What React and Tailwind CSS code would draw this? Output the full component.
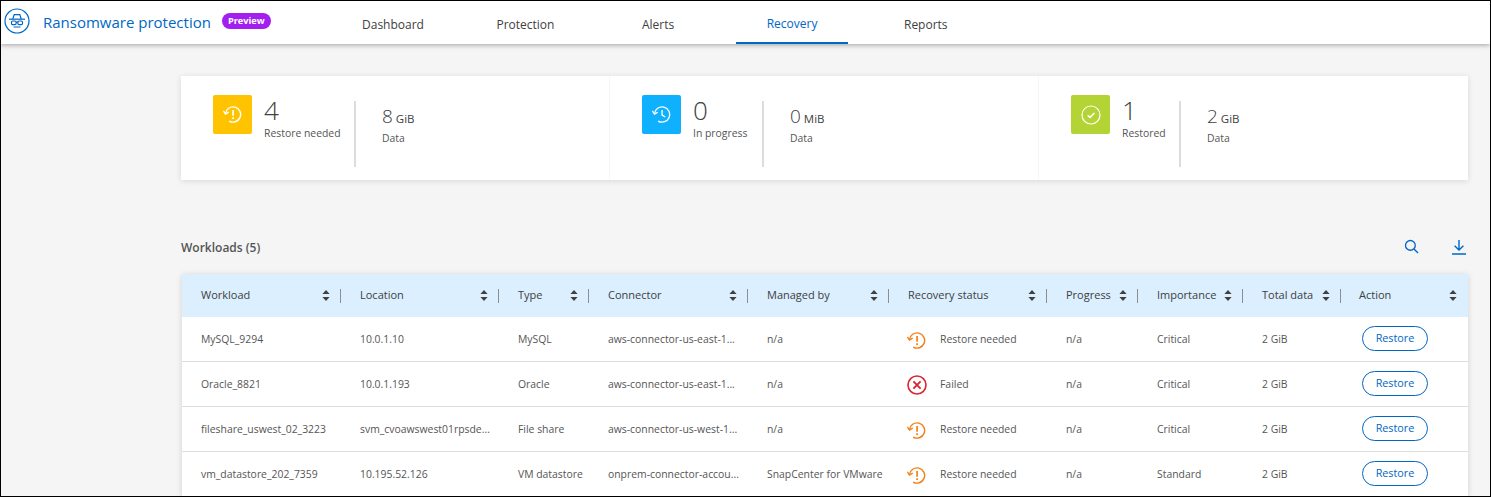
import React from 'react';

const tabs = ['Dashboard', 'Protection', 'Alerts', 'Recovery', 'Reports'];
const columns = ['Workload', 'Location', 'Type', 'Connector', 'Managed by', 'Recovery status', 'Progress', 'Importance', 'Total data', 'Action'];
const gridCols = 'grid grid-cols-[159px_158px_90px_159px_141px_158px_91px_105px_98px_127px]';

const rows = [
  ['MySQL_9294', '10.0.1.10', 'MySQL', 'aws-connector-us-east-1...', 'n/a', 'Restore needed', 'n/a', 'Critical', '2 GiB'],
  ['Oracle_8821', '10.0.1.193', 'Oracle', 'aws-connector-us-east-1...', 'n/a', 'Failed', 'n/a', 'Critical', '2 GiB'],
  ['fileshare_uswest_02_3223', 'svm_cvoawswest01rpsde...', 'File share', 'aws-connector-us-west-1...', 'n/a', 'Restore needed', 'n/a', 'Critical', '2 GiB'],
  ['vm_datastore_202_7359', '10.195.52.126', 'VM datastore', 'onprem-connector-accou...', 'SnapCenter for VMware', 'Restore needed', 'n/a', 'Standard', '2 GiB'],
];

function SpyLogo() {
  return (
    <svg viewBox="0 0 26 26" className="w-[26px] h-[26px]" fill="none" stroke="#0067c5" strokeWidth="1.2">
      <circle cx="13" cy="13" r="12" />
      <path d="M8.8 11l1.4-4.4h5.6l1.4 4.4" />
      <path d="M5 11.2h16" />
      <rect x="7.5" y="13" width="4.6" height="3.6" rx="1.2" />
      <rect x="13.9" y="13" width="4.6" height="3.6" rx="1.2" />
      <path d="M12.1 14.2h1.8M9.5 19h7" />
    </svg>
  );
}

function RestoreIcon({ className }) {
  return (
    <svg viewBox="0 0 20 20" className={className} fill="none" stroke="currentColor" strokeWidth="1.5">
      <path d="M2.6 9.2A8 8 0 1 1 6.5 16.9" />
      <path d="M0.4 6.2l2.2 3.4 3.4-2" />
      <path d="M10.6 5.2v6M10.6 12.8v1.9" strokeWidth="1.8" />
    </svg>
  );
}

function HistoryIcon() {
  return (
    <svg viewBox="0 0 20 20" className="w-[19px] h-[19px] text-white" fill="none" stroke="currentColor" strokeWidth="1.4">
      <path d="M2.6 9.2A8 8 0 1 1 6.5 16.9" />
      <path d="M0.4 6.2l2.2 3.4 3.4-2" />
      <path d="M10.6 5.2v5.4l3.4 2" />
    </svg>
  );
}

function CheckCircleIcon() {
  return (
    <svg viewBox="0 0 20 20" className="w-[20px] h-[20px] text-white" fill="none" stroke="currentColor" strokeWidth="1.2">
      <circle cx="10" cy="10" r="9" />
      <path d="M6.6 10.2l2.4 2.2 4.4-4.4" strokeWidth="1.5" />
    </svg>
  );
}

function FailedIcon() {
  return (
    <svg viewBox="0 0 20 20" className="w-[20px] h-[20px] text-[#d92632]" fill="none" stroke="currentColor" strokeWidth="1.6">
      <circle cx="10" cy="10" r="9" />
      <path d="M6.4 6.4l7.2 7.2M13.6 6.4l-7.2 7.2" strokeWidth="1.9" />
    </svg>
  );
}

function SortIcon() {
  return (
    <svg viewBox="0 0 8 11" className="w-[8px] h-[11px] shrink-0" fill="#404040">
      <path d="M4 0l3.6 4H.4zM4 11L.4 7h7.2z" />
    </svg>
  );
}

function Stat({ color, icon, count, label, labelWidth, value, unit, border }) {
  return (
    <div className={`flex pl-[32px] pt-[19px] ${border ? 'border-r border-[#f6f6f6]' : ''}`}>
      <div className={`w-[39px] h-[39px] rounded-[2px] flex items-center justify-center ${color}`}>{icon}</div>
      <div className={`ml-[12px] ${labelWidth}`}>
        <div className="text-[26px] leading-[28px] mt-[1px] font-light text-[#404040]">{count}</div>
        <div className="text-[10.4px] leading-[15px] mt-[2px] text-[#555]">{label}</div>
      </div>
      <div className="w-[2px] h-[66px] bg-[#dcdcdc] mt-[6px]" />
      <div className="ml-[26px] pt-[9px]">
        <div className="flex items-baseline gap-[3px] text-[#404040] leading-[24px]">
          <span className="text-[19px] font-light">{value}</span>
          <span className="text-[11.5px]">{unit}</span>
        </div>
        <div className="text-[10.4px] leading-[15px] text-[#555]">Data</div>
      </div>
    </div>
  );
}

function StatusCell({ status }) {
  return (
    <div className="flex items-center pl-[18px]">
      <div className="w-[33px] flex">
        {status === 'Failed' ? <FailedIcon /> : <RestoreIcon className="w-[19px] h-[19px] text-[#f57f17]" />}
      </div>
      <span>{status}</span>
    </div>
  );
}

export default function App() {
  return (
    <div
      className="w-[1491px] h-[497px] overflow-hidden border border-black bg-[#f5f5f5]"
      style={{ fontFamily: '"Open Sans", sans-serif' }}
    >
      {/* Header */}
      <div className="h-[43px] bg-white flex shadow-[0_1px_5px_rgba(0,0,0,0.35)] relative">
        <div className="w-[361px] flex items-center pl-[3px] pb-[3px] shrink-0">
          <SpyLogo />
          <span className="ml-[13px] mt-[2px] text-[15px] text-[#0067c5]">Ransomware protection</span>
          <span className="ml-[11px] mb-[1px] h-[16px] px-[6px] rounded-full bg-[#a31ff0] text-white text-[9.2px] font-bold leading-[16px]">Preview</span>
        </div>
        <div className="flex">
          {tabs.map((t) => (
            <div
              key={t}
              className={`h-[43px] px-[31px] pt-[4px] mr-[-0.5px] flex items-center text-[12px] ${
                t === 'Recovery' ? 'text-[#0067c5] border-b-2 border-[#0067c5]' : 'text-[#404040]'
              } ${t === 'Dashboard' ? 'pl-0 pr-[73px]' : ''} ${t === 'Protection' ? 'pl-0 pr-[88px]' : ''} ${t === 'Alerts' ? 'pl-0 pr-[62px]' : ''} ${t === 'Reports' ? 'pl-[56px] pr-0' : ''}`}
            >
              {t}
            </div>
          ))}
        </div>
      </div>

      <div className="pl-[180px] pr-[22px] pt-[32px]">
        {/* Summary */}
        <div className="h-[104px] bg-white grid grid-cols-[429px_429px_429px] shadow-[0_1px_6px_rgba(0,0,0,0.12)]">
          <Stat color="bg-[#ffc300]" icon={<RestoreIcon className="w-[19px] h-[19px] text-white" />} count="4" label="Restore needed" labelWidth="w-[90px]" value="8" unit="GiB" border />
          <Stat color="bg-[#0fb1ff]" icon={<HistoryIcon />} count="0" label="In progress" labelWidth="w-[69px]" value="0" unit="MiB" border />
          <Stat color="bg-[#b4d334]" icon={<CheckCircleIcon />} count="1" label="Restored" labelWidth="w-[57px]" value="2" unit="GiB" />
        </div>

        {/* Toolbar */}
        <div className="flex items-center h-[30px] mt-[53px] mb-[11px] text-[#0067c5]">
          <span className="text-[12px] font-semibold text-[#555]">Workloads (5)</span>
          <svg viewBox="0 0 16 16" className="w-[15px] h-[15px] ml-auto mb-[3px]" fill="none" stroke="currentColor" strokeWidth="1.4">
            <circle cx="6.8" cy="6.8" r="5.2" />
            <path d="M10.6 10.6l4.4 4.4" />
          </svg>
          <svg viewBox="0 0 16 16" className="w-[16px] h-[16px] ml-[32px] mb-[3px] mr-[1px]" fill="none" stroke="currentColor" strokeWidth="1.4">
            <path d="M8 1v10M3.6 6.8L8 11l4.4-4.2M1 15h14" />
          </svg>
        </div>

        {/* Table */}
        <div className="ml-[1px] bg-white shadow-[0_1px_6px_rgba(0,0,0,0.15)] text-[10.4px]">
          <div className={`${gridCols} h-[43px] bg-[#dbefff] items-center text-[#404040] text-[11px]`}>
            {columns.map((c, i) => (
              <div key={c} className={`flex items-center h-full ${i === 9 ? 'pl-[18px]' : 'pl-[19px]'}`}>
                <span>{c}</span>
                <div className={`ml-auto flex items-center ${i === 9 ? 'pr-[11px]' : ''}`}>
                  <SortIcon />
                  {i < 9 && <div className="w-px h-[14px] bg-[#8a8f94] ml-[10px]" />}
                </div>
              </div>
            ))}
          </div>
          {rows.map((r) => (
            <div key={r[0]} className={`${gridCols} h-[45px] pt-[2px] items-center border-b border-[#dedede] text-[#555] whitespace-nowrap`}>
              <div className="pl-[19px]">{r[0]}</div>
              <div className="pl-[19px]">{r[1]}</div>
              <div className="pl-[19px]">{r[2]}</div>
              <div className="pl-[19px]">{r[3]}</div>
              <div className="pl-[19px]">{r[4]}</div>
              <StatusCell status={r[5]} />
              <div className="pl-[19px]">{r[6]}</div>
              <div className="pl-[19px]">{r[7]}</div>
              <div className="pl-[19px]">{r[8]}</div>
              <div className="pl-[21px] mb-[4px]">
                <button className="w-[66px] h-[25px] rounded-full border border-[#0067c5] bg-white text-[#0067c5] text-[10.8px] leading-none">Restore</button>
              </div>
            </div>
          ))}
        </div>
      </div>
    </div>
  );
}
